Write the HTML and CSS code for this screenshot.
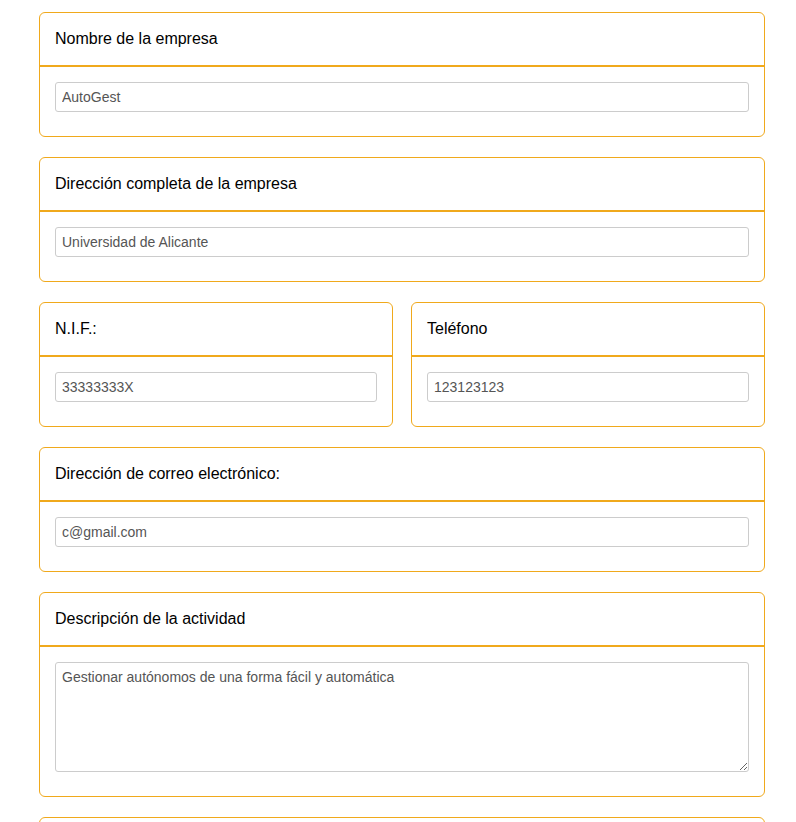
FILE: index.html
```html
<!DOCTYPE html>
<html lang="es">
<head>
<meta charset="utf-8">
<title>Empresa</title>
<link rel="stylesheet" href="styles.css">
</head>
<body>
<div class="page">
  <div class="card">
    <div class="card-header">Nombre de la empresa</div>
    <div class="card-body"><input class="field" type="text" value="AutoGest"></div>
  </div>
  <div class="card">
    <div class="card-header">Dirección completa de la empresa</div>
    <div class="card-body"><input class="field" type="text" value="Universidad de Alicante"></div>
  </div>
  <div class="row">
    <div class="card">
      <div class="card-header">N.I.F.:</div>
      <div class="card-body"><input class="field" type="text" value="33333333X"></div>
    </div>
    <div class="card">
      <div class="card-header">Teléfono</div>
      <div class="card-body"><input class="field" type="text" value="123123123"></div>
    </div>
  </div>
  <div class="card">
    <div class="card-header">Dirección de correo electrónico:</div>
    <div class="card-body"><input class="field" type="text" value="c@gmail.com"></div>
  </div>
  <div class="card">
    <div class="card-header">Descripción de la actividad</div>
    <div class="card-body"><textarea class="field area">Gestionar autónomos de una forma fácil y automática</textarea></div>
  </div>
  <div class="card card-empty"></div>
</div>
</body>
</html>
```

FILE: styles.css
```css
html, body {
  margin: 0;
  padding: 0;
  background: #fff;
}
body {
  font-family: "Liberation Sans", Arial, sans-serif;
  color: #000;
}
.page {
  width: 726px;
  margin: 0 0 0 39px;
  padding-top: 12px;
  display: flex;
  flex-direction: column;
  gap: 20px;
}
.row {
  display: flex;
  gap: 18px;
}
.row .card {
  flex: 1 1 0;
  min-width: 0;
}
.card {
  border: 1px solid #f0a91c;
  border-radius: 6px;
  background: #fff;
}
.card-empty {
  height: 60px;
}
.card-header {
  padding: 14px 15px;
  font-size: 16px;
  line-height: 24px;
  border-bottom: 2px solid #f0a91c;
}
.card-body {
  padding: 15px 15px 24px;
}
.field {
  display: block;
  box-sizing: border-box;
  width: 100%;
  height: 30px;
  margin: 0;
  padding: 5px 6px;
  border: 1px solid #cccccc;
  border-radius: 3px;
  font-family: "Liberation Sans", Arial, sans-serif;
  font-size: 14px;
  color: #555;
  background: #fff;
  outline: none;
}
.area {
  height: 110px;
  resize: vertical;
  line-height: 18px;
  padding-top: 5px;
}
```
